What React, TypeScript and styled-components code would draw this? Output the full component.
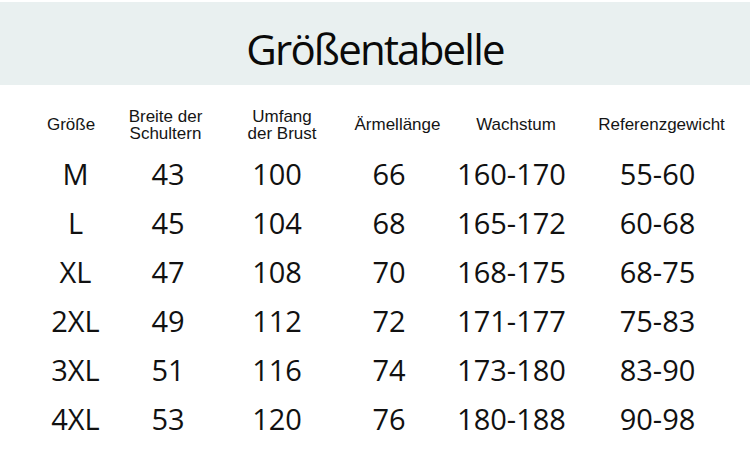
import React from 'react';
import styled, { createGlobalStyle } from 'styled-components';

const GlobalStyle = createGlobalStyle`
	body {
		margin: 0;
		background: #ffffff;
		color: #111111;
	}
`;

// header labels sit on slightly different centres than the numbers below them
const headerColumns = '102px 87px 146px 85px 152px 139px';
const dataColumns = '111px 74px 144px 80px 165px 127px';

const headers = [
	['Größe'],
	['Breite der', 'Schultern'],
	['Umfang', 'der Brust'],
	['Ärmellänge'],
	['Wachstum'],
	['Referenzgewicht']
];

const rows = [
	['M', '43', '100', '66', '160-170', '55-60'],
	['L', '45', '104', '68', '165-172', '60-68'],
	['XL', '47', '108', '70', '168-175', '68-75'],
	['2XL', '49', '112', '72', '171-177', '75-83'],
	['3XL', '51', '116', '74', '173-180', '83-90'],
	['4XL', '53', '120', '76', '180-188', '90-98']
];

export default function App() {
	return (
		<>
			<GlobalStyle />
			<Page>
				<TitleBand>
					<Title>Größentabelle</Title>
				</TitleBand>
				<Table>
					<HeaderRow $columns={headerColumns}>
						{headers.map((lines, i) => (
							<HeaderCell key={i}>
								{lines.map(line => (
									<span key={line}>{line}</span>
								))}
							</HeaderCell>
						))}
					</HeaderRow>
					{rows.map(row => (
						<DataRow key={row[0]} $columns={dataColumns}>
							{row.map((value, i) => (
								<DataCell key={i}>{value}</DataCell>
							))}
						</DataRow>
					))}
				</Table>
			</Page>
		</>
	);
}

const Page = styled.div`
	width: 750px;
	height: 455px;
	padding-top: 2px;
	box-sizing: border-box;
	overflow: hidden;
`;

const TitleBand = styled.div`
	height: 83px;
	box-sizing: border-box;
	padding-top: 10px;
	background: #e9f0f0;
	display: flex;
	align-items: center;
	justify-content: center;
`;

const Title = styled.h1`
	margin: 0;
	font-family: 'Open Sans', 'Noto Sans', sans-serif;
	font-weight: 400;
	font-size: 42px;
	letter-spacing: -1.8px;
	line-height: 1;
	color: #0a0a0a;
`;

const Table = styled.div`
	padding: 15px 0 0 20px;
`;

const RowBase = styled.div<{ $columns: string }>`
	display: grid;
	grid-template-columns: ${p => p.$columns};
	align-items: center;
`;

const HeaderRow = styled(RowBase)`
	height: 49px;
`;

const DataRow = styled(RowBase)`
	height: 49px;
`;

const HeaderCell = styled.div`
	display: flex;
	flex-direction: column;
	align-items: center;
	font-family: 'Liberation Sans', Arial, sans-serif;
	font-size: 17px;
	line-height: 17px;
	color: #151515;
	white-space: nowrap;
`;

const DataCell = styled.div`
	text-align: center;
	font-family: 'Open Sans', 'Noto Sans', sans-serif;
	font-size: 29px;
	line-height: 1;
	color: #111111;
`;
